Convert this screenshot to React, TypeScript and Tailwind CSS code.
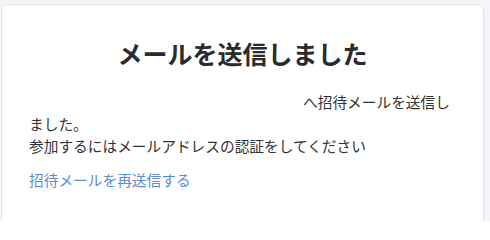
export default function App() {
  return (
    <div
      className="h-[221px] overflow-hidden bg-[#f4f5f9] pt-[4px] pl-px"
      style={{ fontFamily: '"Noto Sans CJK JP", "Noto Sans", sans-serif' }}
    >
      <div className="h-[240px] w-[483px] rounded-md border border-[#e2e3e8] bg-white px-[27px]">
        <h1 className="pt-[31px] text-center text-[25px] leading-[34px] font-bold text-[#2b2b2b]">
          メールを送信しました
        </h1>
        <p className="mt-[21px] text-[14.7px] leading-[22px] text-[#333333]">
          <span className="inline-block w-[274px]" />
          へ招待メールを送信しました。
          <br />
          参加するにはメールアドレスの認証をしてください
        </p>
        <a className="mt-[12px] block text-[14.7px] leading-[22px] text-[#5b8bd9]" href="#">
          招待メールを再送信する
        </a>
      </div>
    </div>
  );
}
